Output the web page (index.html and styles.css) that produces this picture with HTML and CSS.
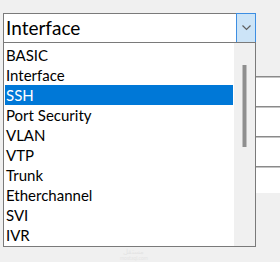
FILE: index.html
```html
<!DOCTYPE html>
<html lang="en">
<head>
  <meta charset="UTF-8">
  <title>Config Section</title>
  <link rel="stylesheet" href="styles.css">
</head>
<body>
  <div class="page">
    <div class="combo">
      <div class="combo-value">Interface</div>
      <div class="combo-btn">
        <svg width="9" height="6" viewBox="0 0 9 6"><path d="M0.5 0.5 L4.5 4.5 L8.5 0.5" fill="none" stroke="#5f5f5f" stroke-width="1.2"/></svg>
      </div>
    </div>

    <div class="fields">
      <div class="field"></div>
      <div class="field"></div>
      <div class="field"></div>
      <div class="field last"></div>
    </div>

    <div class="dropdown">
      <ul class="options">
        <li>BASIC</li>
        <li>Interface</li>
        <li class="selected">SSH</li>
        <li>Port Security</li>
        <li>VLAN</li>
        <li>VTP</li>
        <li>Trunk</li>
        <li>Etherchannel</li>
        <li>SVI</li>
        <li>IVR</li>
      </ul>
      <div class="scrollbar">
        <div class="thumb"></div>
      </div>
    </div>

    <div class="watermark">
      <span>مستقل</span>
      <span class="wm-site">mostaql.com</span>
    </div>
  </div>
</body>
</html>
```

FILE: styles.css
```css
body {
  margin: 0;
  background: #f0f0f0;
  font-family: Lato, "Noto Sans", sans-serif;
  color: #000;
}
.page {
  position: relative;
  width: 280px;
  height: 262px;
  padding: 13px 0 0 3px;
  box-sizing: border-box;
  overflow: hidden;
}
.combo {
  display: flex;
  width: 253px;
  height: 30px;
  box-sizing: border-box;
  border: 1px solid #7a7a7a;
  background: #fff;
}
.combo-value {
  flex: 1;
  font-size: 19px;
  line-height: 28px;
  padding-left: 2px;
}
.combo-btn {
  width: 20px;
  margin: -1px -1px -1px 0;
  box-sizing: border-box;
  border: 1px solid #3d8ee2;
  background: #cce4f7;
  display: flex;
  align-items: center;
  justify-content: center;
}
.fields {
  margin-top: 33px;
  margin-left: auto;
  width: 130px;
}
.field {
  height: 30px;
  box-sizing: border-box;
  border-top: 1px solid #8a8a8a;
  box-shadow: inset 0 1px 0 #c4c4c4;
  background: #fff;
}
.field.last {
  height: 27px;
}
.dropdown {
  position: absolute;
  top: 42px;
  left: 3px;
  width: 253px;
  height: 205px;
  box-sizing: border-box;
  border: 1px solid #7a7a7a;
  background: #fff;
  display: flex;
}
.options {
  list-style: none;
  margin: 0;
  padding: 2px 1px 0 1px;
  flex: 1;
}
.options li {
  height: 20px;
  line-height: 20px;
  font-size: 15px;
  padding-left: 1px;
}
.options li.selected {
  background: #0078d7;
  color: #fff;
}
.scrollbar {
  width: 21px;
  background: #f0f0f0;
  padding-top: 22px;
}
.thumb {
  width: 3px;
  height: 82px;
  margin: 0 auto;
  background: #8f8f8f;
  box-shadow: 1px 0 0 #c0c0c0, -1px 0 0 #c0c0c0;
}
.watermark {
  position: absolute;
  left: 120px;
  top: 247px;
  display: flex;
  flex-direction: column;
  align-items: center;
  font-size: 7px;
  line-height: 8px;
  color: #e4e4e4;
}
.wm-site {
  font-size: 5px;
  line-height: 6px;
}
```
